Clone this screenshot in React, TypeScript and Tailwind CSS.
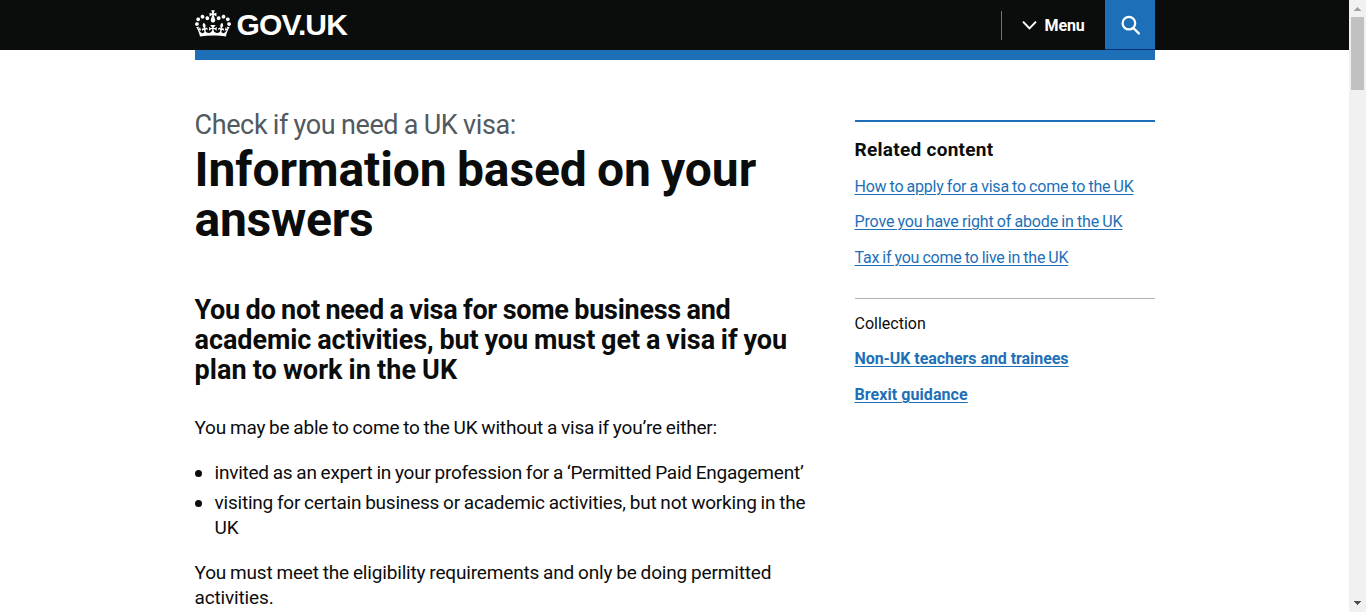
function Crown() {
  return (
    <svg className="mt-[10px] h-[27px] w-9 shrink-0" viewBox="0 0 132 97" fill="currentColor" aria-hidden="true">
      <path d="M25 30.2c3.5 1.5 7.7-.2 9.1-3.7 1.5-3.6-.2-7.8-3.9-9.2-3.6-1.4-7.6.3-9.1 3.9-1.4 3.5.3 7.5 3.9 9zM9 39.5c3.6 1.5 7.8-.2 9.2-3.7 1.5-3.6-.2-7.8-3.9-9.1-3.6-1.5-7.6.2-9.1 3.8-1.4 3.5.3 7.5 3.8 9zM4.4 57.2c3.5 1.5 7.7-.2 9.1-3.8 1.5-3.6-.2-7.7-3.9-9.1-3.5-1.5-7.6.3-9.1 3.8-1.4 3.5.3 7.6 3.9 9.1zm38.3-21.4c3.5 1.5 7.7-.2 9.1-3.8 1.5-3.6-.2-7.7-3.9-9.1-3.6-1.5-7.6.3-9.1 3.8-1.3 3.6.4 7.7 3.9 9.1zm64.4-5.6c-3.6 1.5-7.8-.2-9.1-3.7-1.5-3.6.2-7.8 3.8-9.2 3.6-1.4 7.7.3 9.2 3.9 1.3 3.5-.4 7.5-3.9 9zm15.9 9.3c-3.6 1.5-7.7-.2-9.1-3.7-1.5-3.6.2-7.8 3.7-9.1 3.6-1.5 7.7.2 9.2 3.8 1.5 3.5-.3 7.5-3.8 9zm4.7 17.7c-3.6 1.5-7.8-.2-9.2-3.8-1.5-3.6.2-7.7 3.9-9.1 3.6-1.5 7.7.3 9.2 3.8 1.3 3.5-.4 7.6-3.9 9.1zM89.3 35.8c-3.6 1.5-7.8-.2-9.2-3.8-1.4-3.6.2-7.7 3.9-9.1 3.6-1.5 7.7.3 9.2 3.8 1.4 3.6-.3 7.7-3.9 9.1zM69.7 17.7l8.9 4.7V9.3l-8.9 2.8c-.2-.3-.5-.6-.9-.9L72.4 0H59.6l3.5 11.2c-.3.3-.6.5-.9.9l-8.8-2.8v13.1l8.8-4.7c.3.3.6.7.9.9l-5 15.4v.1c-.2.8-.4 1.6-.4 2.4 0 4.1 3.1 7.5 7 8.1h.2c.3 0 .7.1 1 .1.4 0 .7 0 1-.1h.2c4-.6 7.1-4.1 7.1-8.1 0-.8-.1-1.7-.4-2.4V34l-5.1-15.4c.4-.2.7-.6 1-.9zM66 92.8c16.9 0 32.8 1.1 47.1 3.2 4-16.9 8.9-26.7 14-33.5l-9.6-3.4c1 4.9 1.1 7.2 0 10.2-1.5-1.4-3-4.3-4.2-8.7L108.6 76c2.8-2 5-3.2 7.5-3.3-4.4 9.4-10 11.9-13.6 11.2-4.3-.8-6.3-4.6-5.6-7.9 1-4.7 5.7-5.9 8-.5 4.3-8.7-3-11.4-7.6-8.8 7.1-7.2 7.9-13.5 2.1-21.1-8 6.1-8.1 12.3-4.5 20.8-4.7-5.4-12.1-2.5-9.5 6.2 3.4-5.2 7.9-2 7.2 3.1-.6 4.3-6.4 7.8-13.5 7.2-10.3-.9-10.9-8-11.2-13.8 2.5-.5 7.1 1.8 11 7.3L80.2 60c-4.1 4.4-8 5.3-12.3 5.4 1.4-4.4 8-11.6 8-11.6H55.5s6.4 7.2 7.9 11.6c-4.2-.1-8-1-12.3-5.4l1.4 16.4c3.9-5.5 8.5-7.7 10.9-7.3-.3 5.8-.9 12.8-11.1 13.8-7.2.6-12.9-2.9-13.5-7.2-.7-5 3.8-8.3 7.1-3.1 2.7-8.7-4.6-11.6-9.4-6.2 3.7-8.5 3.6-14.7-4.6-20.8-5.8 7.6-5 13.9 2.2 21.1-4.7-2.6-11.9.1-7.7 8.8 2.3-5.5 7.1-4.2 8.1.5.7 3.3-1.3 7.1-5.7 7.9-3.5.7-9-1.8-13.5-11.2 2.5.1 4.7 1.3 7.5 3.3l-4.7-15.4c-1.2 4.4-2.7 7.2-4.3 8.7-1.1-3-.9-5.3 0-10.2l-9.5 3.4c5 6.9 9.9 16.7 14 33.5 14.8-2.1 30.8-3.2 47.7-3.2z" />
    </svg>
  );
}

function Header() {
  return (
    <header className="bg-[#0b0c0c] text-white">
      <div className="mx-auto flex h-[50px] w-[960px]">
        <a href="#" className="flex">
          <Crown />
          <span className="ml-[6px] font-['Liberation_Sans',sans-serif] text-[30px] leading-[50px] font-bold tracking-[-0.85px]">
            GOV.UK
          </span>
        </a>
        <nav className="ml-auto flex">
          <span className="mt-[11px] h-[29px] w-px bg-[#6f7577]" />
          <button className="flex w-[103px] items-start pl-5">
            <svg className="mt-[20px] h-[11px] w-[15px]" viewBox="0 0 15 11" fill="none" stroke="currentColor" strokeWidth="2" aria-hidden="true">
              <path d="M1 1.6 7.5 8.4 14 1.6" />
            </svg>
            <span className="ml-[8px] text-base leading-[51px] font-bold tracking-[-0.1px]">Menu</span>
          </button>
          <button aria-label="Search" className="h-[50px] w-[50px] border-b border-[#003078] bg-[#1d70b8] pl-[15.5px]">
            <svg className="h-5 w-5" viewBox="0 0 27 27" fill="none" stroke="currentColor" strokeWidth="3" aria-hidden="true">
              <circle cx="12.016" cy="11.016" r="8.516" />
              <path d="M17.867 17.359 26.448 25.939" />
            </svg>
          </button>
        </nav>
      </div>
    </header>
  );
}

const linkClass = "underline decoration-1 underline-offset-2";

function Related() {
  return (
    <aside className="mt-[60px] w-[300px] border-t-2 border-[#1d70b8] text-base leading-5 whitespace-nowrap text-[#1d70b8]">
      <h2 className="mt-[15px] text-[19px] leading-[25px] font-bold tracking-[0.28px] text-[#0b0c0c]">Related content</h2>
      <ul className="mt-[15px] flex flex-col">
        <li className="h-[35px] tracking-[-0.23px] [word-spacing:-0.5px]"><a href="#" className={linkClass}>How to apply for a visa to come to the UK</a></li>
        <li className="h-[36px] tracking-[-0.16px] [word-spacing:-0.5px]"><a href="#" className={linkClass}>Prove you have right of abode in the UK</a></li>
        <li className="h-[50px] tracking-[-0.24px] [word-spacing:-0.5px]"><a href="#" className={linkClass}>Tax if you come to live in the UK</a></li>
      </ul>
      <h3 className="border-t border-[#b1b4b6] pt-[15px] text-[#0b0c0c]">Collection</h3>
      <ul className="mt-[15px] flex flex-col gap-4 font-bold">
        <li className="tracking-[-0.06px]"><a href="#" className={linkClass}>Non-UK teachers and trainees</a></li>
        <li className="tracking-[0.07px]"><a href="#" className={linkClass}>Brexit guidance</a></li>
      </ul>
    </aside>
  );
}

function Bullet() {
  return <span className="mt-[10px] mr-[12.5px] ml-[0.5px] h-[7px] w-[7px] shrink-0 rounded-full bg-[#0b0c0c]" />;
}

function Outcome() {
  return (
    <div className="w-[660px] pt-[50px] text-[19px] leading-[25px] whitespace-nowrap">
      <p className="text-[27px] leading-[30px] tracking-[-0.38px] text-[#505a5f] [word-spacing:-0.7px]">Check if you need a UK visa:</p>
      <h1 className="mt-[5px] text-[48px] leading-[50px] font-bold">
        <span className="block tracking-[-0.08px] [word-spacing:-1.6px]">Information based on your</span>
        <span className="block tracking-[-0.25px]">answers</span>
      </h1>
      <h2 className="mt-[50px] text-[27px] leading-[30px] font-bold [word-spacing:-0.8px]">
        <span className="block tracking-[-0.27px]">You do not need a visa for some business and</span>
        <span className="block tracking-[-0.06px]">academic activities, but you must get a visa if you</span>
        <span className="block tracking-[0.08px]">plan to work in the UK</span>
      </h2>
      <p className="mt-[30px] tracking-[-0.2px] [word-spacing:-0.6px]">You may be able to come to the UK without a visa if you’re either:</p>
      <ul className="mt-5 flex flex-col gap-[5px]">
        <li className="flex">
          <Bullet />
          <span className="tracking-[-0.23px] [word-spacing:-0.6px]">invited as an expert in your profession for a ‘Permitted Paid Engagement’</span>
        </li>
        <li className="flex">
          <Bullet />
          <span>
            <span className="block tracking-[-0.21px] [word-spacing:-0.6px]">visiting for certain business or academic activities, but not working in the</span>
            <span className="block">UK</span>
          </span>
        </li>
      </ul>
      <p className="mt-5">
        <span className="block tracking-[-0.17px] [word-spacing:-0.6px]">You must meet the eligibility requirements and only be doing permitted</span>
        <span className="block tracking-[-0.15px]">activities.</span>
      </p>
    </div>
  );
}

function Scrollbar() {
  return (
    <div className="flex h-full w-[17px] flex-col items-center bg-[#f1f1f1]">
      <svg className="h-[17px] w-[17px]" viewBox="0 0 17 17" shapeRendering="crispEdges" aria-hidden="true">
        <path d="M8 7h1v1h1v1h1v1h1v1H5v-1h1V9h1V8h1z" fill="#a3a3a3" />
      </svg>
      <div className="h-[73px] w-[13px] bg-[#c1c1c1]" />
      <svg className="mt-auto h-[17px] w-[17px]" viewBox="0 0 17 17" shapeRendering="crispEdges" aria-hidden="true">
        <path d="M5 6h7v1h-1v1h-1v1H9v1H8V9H7V8H6V7H5z" fill="#505050" />
      </svg>
    </div>
  );
}

export default function App() {
  return (
    <div className="flex h-[612px] w-[1366px] overflow-hidden bg-white font-['Roboto',sans-serif] text-[#0b0c0c]">
      <div className="w-[1349px]">
        <Header />
        <main className="mx-auto w-[960px]">
          <div className="h-[10px] bg-[#1d70b8]" />
          <div className="flex">
            <Outcome />
            <Related />
          </div>
        </main>
      </div>
      <Scrollbar />
    </div>
  );
}
